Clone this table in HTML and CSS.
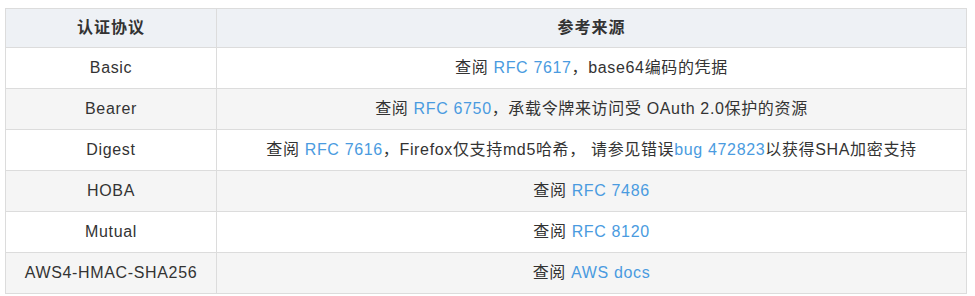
FILE: index.html
```html
<!DOCTYPE html>
<html lang="zh-CN">
<head>
<meta charset="utf-8">
<title>认证协议</title>
<link rel="stylesheet" href="styles.css">
</head>
<body>
<table class="auth-table">
  <colgroup>
    <col class="col-scheme">
    <col class="col-ref">
  </colgroup>
  <thead>
    <tr><th>认证协议</th><th>参考来源</th></tr>
  </thead>
  <tbody>
    <tr><td>Basic</td><td>查阅 <a href="#">RFC 7617</a>，base64编码的凭据</td></tr>
    <tr><td>Bearer</td><td>查阅 <a href="#">RFC 6750</a>，承载令牌来访问受 OAuth 2.0保护的资源</td></tr>
    <tr><td>Digest</td><td>查阅 <a href="#">RFC 7616</a>，Firefox仅支持md5哈希， 请参见错误<a href="#">bug 472823</a>以获得SHA加密支持</td></tr>
    <tr><td>HOBA</td><td>查阅 <a href="#">RFC 7486</a></td></tr>
    <tr><td>Mutual</td><td>查阅 <a href="#">RFC 8120</a></td></tr>
    <tr><td>AWS4-HMAC-SHA256</td><td>查阅 <a href="#">AWS docs</a></td></tr>
  </tbody>
</table>
</body>
</html>
```
FILE: styles.css
```css
html, body {
  background: #ffffff;
}
body {
  margin: 8px 0 0 5px;
  font-family: "Liberation Sans", "Noto Sans CJK SC", sans-serif;
  font-size: 16px;
  color: #333333;
}
.auth-table {
  border-collapse: collapse;
  table-layout: fixed;
  width: 962px;
  border: 1px solid #dcdcdc;
}
.col-scheme { width: 211px; }
.auth-table th,
.auth-table td {
  border: 1px solid #dcdcdc;
  text-align: center;
  padding: 0 8px;
  line-height: 24px;
  letter-spacing: 0.65px;
}
.auth-table th {
  height: 38px;
  background: #eef1f5;
  font-weight: bold;
  color: #333333;
  letter-spacing: 1px;
}
.auth-table td {
  height: 40px;
}
.auth-table tbody tr:nth-child(even) td {
  background: #f5f5f5;
}
.auth-table a {
  color: #4a9be0;
  text-decoration: none;
}
```
